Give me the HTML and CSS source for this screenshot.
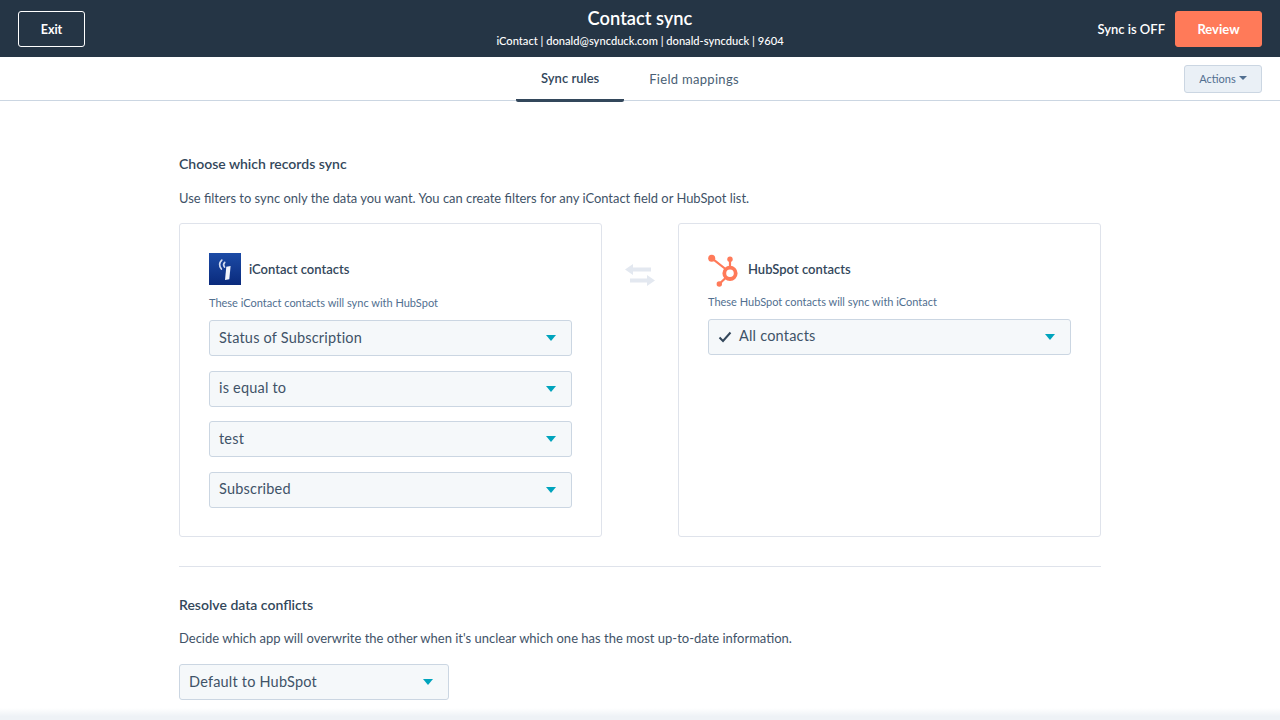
FILE: index.html
```html
<!DOCTYPE html>
<html lang="en">
<head>
<meta charset="utf-8">
<title>Contact sync</title>
<link rel="stylesheet" href="styles.css">
</head>
<body>
<header class="topbar">
  <button class="exit">Exit</button>
  <div class="title">
    <h1>Contact sync</h1>
    <p>iContact | donald@syncduck.com | donald-syncduck | 9604</p>
  </div>
  <div class="top-right">
    <span class="status">Sync is OFF</span>
    <button class="review">Review</button>
  </div>
</header>
<nav class="tabs">
  <div class="tab-list">
    <a class="tab active">Sync rules</a>
    <a class="tab">Field mappings</a>
  </div>
  <button class="actions"><span class="actions-label">Actions</span><span class="caret small"></span></button>
</nav>
<main class="content">
  <h2>Choose which records sync</h2>
  <p class="lead">Use filters to sync only the data you want. You can create filters for any iContact field or HubSpot list.</p>
  <div class="panels">
    <section class="card">
      <div class="card-head">
        <svg class="logo" viewBox="0 0 32 32" aria-hidden="true">
          <defs><linearGradient id="ic" x1="0" y1="0" x2="0" y2="1"><stop offset="0" stop-color="#1c4ba6"/><stop offset="1" stop-color="#0a2a7c"/></linearGradient></defs>
          <rect width="32" height="32" fill="url(#ic)"/>
          <path d="M17.300 13.800l4.300-.8-1.300 13.200-4.300.8z" fill="#f2f5fb"/>
          <path d="M12.400 16c-2.300-2.800-2.200-6.200.4-8.800M15.500 14c-1.200-1.500-1.100-3.300.2-4.700" fill="none" stroke="#d3dcef" stroke-width="1.700" stroke-linecap="round"/>
        </svg>
        <h3>iContact contacts</h3>
      </div>
      <p class="hint">These iContact contacts will sync with HubSpot</p>
      <div class="fields">
        <div class="select"><span>Status of Subscription</span><span class="caret"></span></div>
        <div class="select"><span>is equal to</span><span class="caret"></span></div>
        <div class="select"><span>test</span><span class="caret"></span></div>
        <div class="select"><span>Subscribed</span><span class="caret"></span></div>
      </div>
    </section>
    <div class="swap">
      <svg viewBox="0 0 30 22" width="30" height="22" aria-hidden="true">
        <path d="M0 5.500L8 0v3.500h18v4H8V11zM30 16.500L22 11v3.500H5v4h17V22z" fill="#e3e8f0"/>
      </svg>
    </div>
    <section class="card right">
      <div class="card-head">
        <svg class="logo hub" viewBox="0 0 32 32" aria-hidden="true">
          <g fill="none" stroke="#ff7a59" stroke-linecap="round">
            <circle cx="22" cy="20.300" r="5.700" stroke-width="3.800"/>
            <path d="M22 13V7M17.500 16L4 5.300M17.500 25L11.300 31" stroke-width="2.200"/>
          </g>
          <g fill="#ff7a59">
            <circle cx="22" cy="6.300" r="2.700"/>
            <circle cx="3.700" cy="5.300" r="3.500"/>
            <circle cx="11.300" cy="31" r="2.700"/>
          </g>
        </svg>
        <h3>HubSpot contacts</h3>
      </div>
      <p class="hint">These HubSpot contacts will sync with iContact</p>
      <div class="fields">
        <div class="select">
          <span class="with-check">
            <svg class="check" viewBox="0 0 14 12" aria-hidden="true"><path d="M1.500 6.500L5 10l7.500-8.500" fill="none" stroke="#33475b" stroke-width="2"/></svg>
            All contacts
          </span>
          <span class="caret"></span>
        </div>
      </div>
    </section>
  </div>
  <hr class="divider">
  <h2>Resolve data conflicts</h2>
  <p class="lead second">Decide which app will overwrite the other when it's unclear which one has the most up-to-date information.</p>
  <div class="select narrow"><span>Default to HubSpot</span><span class="caret"></span></div>
</main>
<div class="bottom-fade"></div>
</body>
</html>
```
FILE: styles.css
```css
* { box-sizing: border-box; }
html, body { height: 100%; }
body {
  margin: 0;
  overflow: hidden;
  background: #fff;
  color: #33475b;
  font-family: Lato, "Open Sans", sans-serif;
}
button { font-family: inherit; cursor: pointer; }
h1, h2, h3, p { margin: 0; }

.topbar {
  height: 57px;
  background: #253545;
  color: #fff;
  display: flex;
  align-items: center;
  justify-content: space-between;
  padding: 0 18px;
  position: relative;
}
.exit {
  width: 67px;
  height: 36px;
  background: transparent;
  border: 1px solid #fff;
  border-radius: 3px;
  color: #fff;
  font-size: 12.500px;
  font-weight: 700;
  padding: 1px 0 0;
}
.title {
  position: absolute;
  left: 0;
  right: 0;
  top: 7px;
  text-align: center;
}
.title h1 {
  font-size: 18.300px;
  line-height: 22px;
  font-weight: 600;
}
.title p {
  font-size: 11.150px;
  line-height: 14px;
  margin-top: 5px;
  font-weight: 500;
}
.top-right {
  display: flex;
  align-items: center;
  gap: 10px;
  position: relative;
}
.status { font-size: 13px; font-weight: 600; }
.review {
  width: 87px;
  height: 36px;
  background: #ff7a59;
  border: 1px solid #ff7a59;
  border-radius: 3px;
  color: #fff;
  font-size: 13px;
  font-weight: 700;
  padding: 0;
}

.tabs {
  height: 44px;
  border-bottom: 1px solid #cbd6e2;
  position: relative;
  display: flex;
  justify-content: center;
}
.tab-list { display: flex; }
.tab {
  height: 45px;
  padding: 0 25px 2px;
  display: flex;
  align-items: center;
  font-size: 13px;
  letter-spacing: 0.3px;
  color: #4a5f75;
}
.tab.active {
  font-weight: 600;
  font-size: 13px;
  letter-spacing: 0;
  color: #33475b;
  border-bottom: 3px solid #33475b;
  border-radius: 0 0 2px 2px;
  padding-bottom: 0;
}
.actions {
  position: absolute;
  right: 18px;
  top: 8px;
  width: 78px;
  height: 28px;
  background: #eaf0f6;
  border: 1px solid #cbd6e2;
  border-radius: 3px;
  color: #516f90;
  font-size: 11px;
  padding: 0 0 2px;
  display: flex;
  align-items: center;
  justify-content: center;
  gap: 3px;
}

.content {
  width: 922px;
  margin: 0 auto;
  padding-top: 54px;
}
h2 {
  font-size: 14px;
  line-height: 18px;
  font-weight: 600;
  color: #33475b;
}
.lead {
  font-size: 12.930px;
  line-height: 18px;
  margin-top: 16px;
  color: #3f5368;
}
.lead.second { margin-top: 15px; font-size: 13px; }
.panels {
  display: flex;
  justify-content: space-between;
  align-items: stretch;
  margin-top: 16px;
}
.card {
  width: 423px;
  height: 314px;
  border: 1px solid #dfe3eb;
  border-radius: 3px;
  padding: 29px;
}
.card-head {
  display: flex;
  align-items: center;
  gap: 8px;
  height: 32px;
}
.logo { width: 32px; height: 32px; flex: none; }
.hub { overflow: visible; }
.card h3 {
  font-size: 13px;
  line-height: 16px;
  font-weight: 600;
  color: #33475b;
}
.hint {
  font-size: 11px;
  line-height: 14px;
  color: #516f90;
  margin-top: 11px;
}
.fields {
  display: flex;
  flex-direction: column;
  gap: 14.500px;
  margin-top: 10px;
}
.right .hint { margin-top: 10px; }
.swap {
  flex: 1;
  display: flex;
  justify-content: center;
  padding-top: 41px;
}
.swap svg { display: block; }
.select {
  height: 36px;
  background: #f5f8fa;
  border: 1px solid #cbd6e2;
  border-radius: 3px;
  display: flex;
  align-items: center;
  justify-content: space-between;
  padding: 0 15px 2px 9px;
  font-size: 14.500px;
  letter-spacing: 0.2px;
  color: #3f5368;
}
.select .caret { margin-top: 2px; }
.select.narrow { width: 270px; margin-top: 17px; }
.with-check { display: flex; align-items: center; gap: 7px; margin-bottom: 2px; }
.check { width: 14px; height: 12px; margin-top: 3px; }
.caret {
  width: 0;
  height: 0;
  border-left: 5.500px solid transparent;
  border-right: 5.500px solid transparent;
  border-top: 6px solid #00a4bd;
}
.caret.small {
  border-left-width: 4px;
  border-right-width: 4px;
  border-top: 4px solid #516f90;
}
.divider {
  border: 0;
  border-top: 1px solid #dfe3eb;
  margin: 29px 0;
}
.bottom-fade {
  position: fixed;
  left: 0;
  right: 0;
  bottom: 0;
  height: 12px;
  background: linear-gradient(#ffffff, #eef2f6 70%);
}
```
